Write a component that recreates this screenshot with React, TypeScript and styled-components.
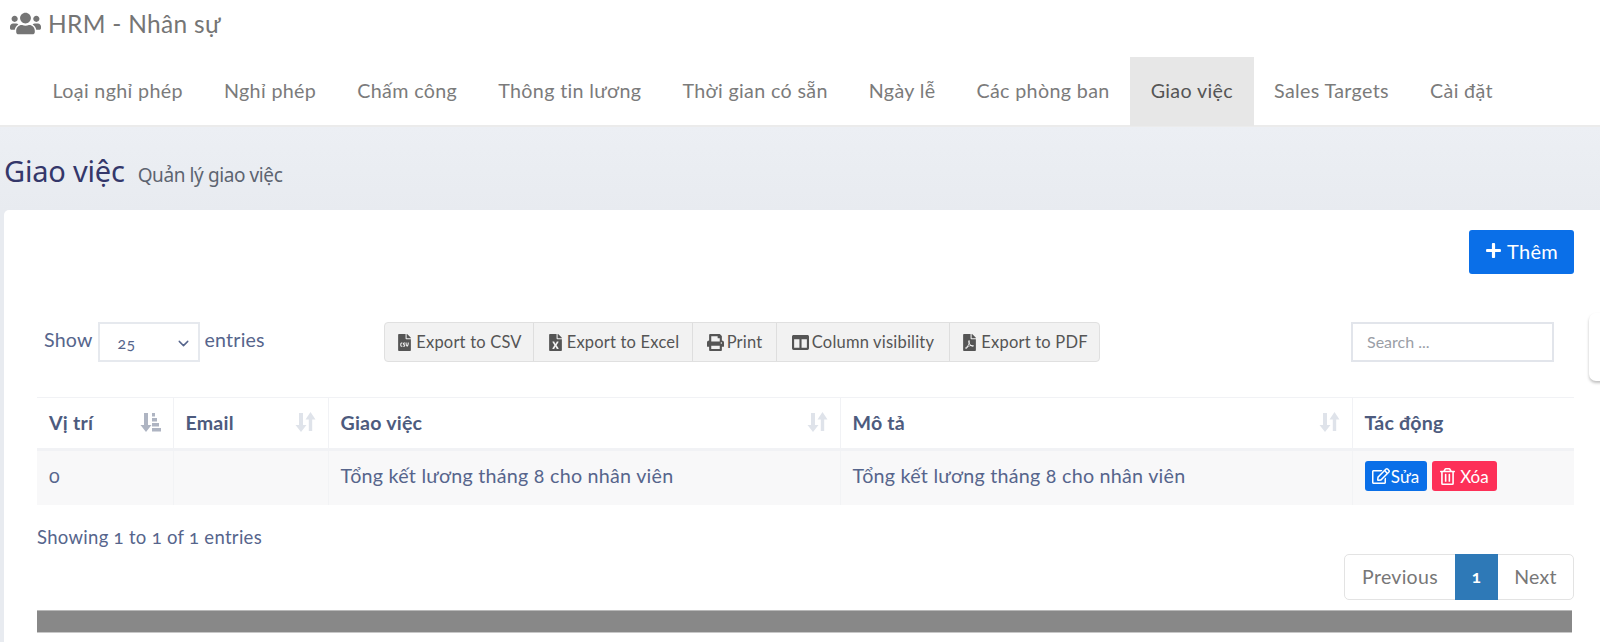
import styled, { createGlobalStyle } from 'styled-components';
import {
    FaUsers,
    FaPlus,
    FaFileCsv,
    FaFileExcel,
    FaPrint,
    FaColumns,
    FaFilePdf,
    FaRegEdit,
    FaRegTrashAlt,
} from 'react-icons/fa';
import { LuChevronDown } from 'react-icons/lu';

const GlobalStyle = createGlobalStyle`
    html, body {
        margin: 0;
        padding: 0;
        background: #ffffff;
        overflow: hidden;
    }
    * {
        box-sizing: border-box;
    }
`;

const Page = styled.div`
    position: relative;
    width: 1600px;
    height: 642px;
    overflow: hidden;
    font-family: 'Lato', 'Liberation Sans', sans-serif;
    font-variant-numeric: oldstyle-nums;
    background: #ffffff;
`;

const Header = styled.header`
    height: 127px;
    background: #ffffff;
    border-bottom: 2px solid #ebebeb;
`;

const BrandRow = styled.div`
    display: flex;
    align-items: center;
    gap: 7px;
    height: 46px;
    margin-bottom: 11px;
    padding-left: 10px;
    font-size: 24.5px;
    letter-spacing: 0.3px;
    color: #757575;
`;

const Nav = styled.nav`
    display: flex;
    height: 69px;
    padding-left: 32px;
`;

const NavItem = styled.a<{ $active?: boolean }>`
    display: flex;
    align-items: center;
    padding: 0 20.5px 3px;
    font-size: 19.7px;
    letter-spacing: 0.35px;
    color: ${(p) => (p.$active ? '#555555' : '#7b7b7b')};
    background: ${(p) => (p.$active ? '#e7e7e7' : 'transparent')};
`;

const Content = styled.main`
    height: 515px;
    padding: 0 0 0 4px;
    background: linear-gradient(#eceff4, #e8ebf0 84px);
`;

const TitleRow = styled.div`
    display: flex;
    align-items: baseline;
    gap: 13px;
    height: 83px;
    padding-top: 24px;
`;

const Title = styled.h1`
    margin: 0;
    font-family: 'Noto Sans', sans-serif;
    font-size: 29px;
    font-weight: 400;
    letter-spacing: -0.2px;
    color: #34376a;
`;

const SubTitle = styled.small`
    font-family: 'Noto Sans', sans-serif;
    font-size: 19px;
    letter-spacing: -0.4px;
    color: #5d6470;
`;

const Card = styled.section`
    height: 432px;
    padding: 20px 26px 0 33px;
    background: #ffffff;
    border-radius: 5px 0 0 0;
`;

const ActionRow = styled.div`
    display: flex;
    justify-content: flex-end;
    height: 92px;
`;

const AddButton = styled.button`
    display: flex;
    align-items: center;
    justify-content: center;
    gap: 5px;
    width: 105px;
    height: 44px;
    padding-bottom: 4px;
    border: 0;
    border-radius: 3px;
    background: #0a6fe8;
    color: #ffffff;
    font-family: inherit;
    font-size: 20px;
    letter-spacing: 0.3px;
`;

const Toolbar = styled.div`
    display: flex;
    align-items: flex-start;
    height: 75px;
`;

const LengthControl = styled.label`
    display: flex;
    align-items: flex-start;
    gap: 5px;
    width: 347px;
    padding-left: 7px;
    font-size: 19.6px;
    line-height: 36px;
    letter-spacing: 0.2px;
    color: #56658c;
`;

const SelectBox = styled.div`
    display: flex;
    align-items: center;
    justify-content: space-between;
    width: 102px;
    height: 40px;
    padding: 2px 6px 0 18px;
    border: 2px solid #e6e9ee;
    font-size: 16px;
    line-height: 1;
    color: #56658c;
`;

const ExportGroup = styled.div`
    display: flex;
    height: 40px;
    border: 1px solid #e0e0e0;
    border-radius: 4px;
    background: #f2f2f2;
`;

const ExportButton = styled.button<{ $width: number }>`
    display: flex;
    align-items: center;
    justify-content: center;
    gap: 3px;
    width: ${(p) => p.$width}px;
    padding: 0;
    border: 0;
    border-right: 1px solid #dedede;
    background: transparent;
    font-family: inherit;
    font-size: 16.5px;
    letter-spacing: 0.2px;
    color: #555555;

    &:last-child {
        border-right: 0;
    }
`;

const SearchInput = styled.input`
    width: 203px;
    height: 40px;
    margin-left: auto;
    margin-right: 20px;
    padding: 0 0 2px 14px;
    border: 2px solid #e2e5eb;
    outline: 0;
    font-family: inherit;
    font-size: 16px;

    &::placeholder {
        color: #9a9ea6;
        opacity: 1;
    }
`;

const Table = styled.table`
    width: 1537px;
    table-layout: fixed;
    border-collapse: collapse;
    color: #56658c;
`;

const HeadCell = styled.th<{ $width?: number }>`
    width: ${(p) => (p.$width ? `${p.$width}px` : 'auto')};
    height: 52px;
    padding: 0 12px 2px;
    text-align: left;
    font-size: 19.6px;
    font-weight: 700;
    letter-spacing: 0.2px;
    color: #4d5b7e;
    border-top: 1px solid #f1f2f5;
    border-left: 1px solid #f1f2f5;
    border-bottom: 3px solid #f1f2f5;

    &:first-child {
        border-left: 0;
    }
`;

const HeadInner = styled.div`
    display: flex;
    align-items: center;
    justify-content: space-between;
`;

const Row = styled.tr`
    background: #f8f8f9;
`;

const BodyCell = styled.td`
    height: 55px;
    padding: 0 12px 5px;
    font-size: 19.7px;
    letter-spacing: 0.25px;
    border-left: 1px solid #f2f3f5;

    &:first-child {
        border-left: 0;
    }
`;

const ActionCell = styled(BodyCell)`
    padding-bottom: 3px;
`;

const RowActions = styled.div`
    display: flex;
    gap: 5px;
`;

const SmallButton = styled.button<{ $danger?: boolean }>`
    display: flex;
    align-items: center;
    justify-content: center;
    gap: ${(p) => (p.$danger ? '4px' : '1px')};
    width: ${(p) => (p.$danger ? '65px' : '62px')};
    height: 30px;
    padding: 0;
    border: 0;
    border-radius: 3px;
    background: ${(p) => (p.$danger ? '#fd3058' : '#0a6fe8')};
    color: #ffffff;
    font-family: inherit;
    font-size: 17px;
`;

const InfoText = styled.div`
    height: 49px;
    padding-top: 21px;
    font-size: 18.5px;
    line-height: 22px;
    letter-spacing: 0.3px;
    color: #56658c;
`;

const PagerRow = styled.div`
    display: flex;
    justify-content: flex-end;
    width: 1537px;
    height: 56px;
`;

const Pager = styled.div`
    display: flex;
    height: 46px;
    border: 1px solid #e3e3e3;
    border-radius: 5px;
    color: #777777;
    font-size: 19.5px;
    letter-spacing: 0.3px;
`;

const PageLink = styled.a<{ $active?: boolean; $width: number }>`
    display: flex;
    align-items: center;
    justify-content: center;
    width: ${(p) => p.$width}px;
    margin: ${(p) => (p.$active ? '-1px 0' : '0')};
    background: ${(p) => (p.$active ? '#2e79b7' : 'transparent')};
    color: ${(p) => (p.$active ? '#ffffff' : '#777777')};
    font-size: ${(p) => (p.$active ? '17px' : 'inherit')};
    font-weight: ${(p) => (p.$active ? 700 : 400)};
`;

const GreyBar = styled.div`
    width: 1535px;
    height: 23px;
    background: #888888;
    border-top: 1px solid #b8b8b8;
    border-bottom: 1px solid #c8c8c8;
`;

const SideTab = styled.div`
    position: absolute;
    top: 313px;
    left: 1589px;
    width: 30px;
    height: 68px;
    background: #ffffff;
    border-radius: 7px;
    box-shadow: 0 2px 3px rgba(0, 0, 0, 0.25);
`;

const SortIcon = () => (
    <svg width="22" height="22" viewBox="0 0 22 22" fill="#dfe3ea">
        <path d="M5 2h4v12h3.500L7 21 1.500 14H5z" />
        <path d="M11.500 8.500 16.500 1l5 7.500h-3.300V20h-3.400V8.500z" />
    </svg>
);

const SortedIcon = () => (
    <svg width="22" height="22" viewBox="0 0 22 22" fill="#aeb4c2">
        <path d="M5 2h4v12h3.500L7 21 1.500 14H5z" />
        <path d="M13 2h3v3.500h-3zM13 7h5v3.500h-5zM13 12h7v3.500h-7zM13 17h9v3.500h-9z" />
    </svg>
);

const NAV_ITEMS = [
    'Loại nghỉ phép',
    'Nghỉ phép',
    'Chấm công',
    'Thông tin lương',
    'Thời gian có sẵn',
    'Ngày lễ',
    'Các phòng ban',
    'Giao việc',
    'Sales Targets',
    'Cài đặt',
];

const App = () => {
    return (
        <Page>
            <GlobalStyle />
            <Header>
                <BrandRow>
                    <FaUsers size={31} />
                    HRM - Nhân sự
                </BrandRow>
                <Nav>
                    {NAV_ITEMS.map((item) => (
                        <NavItem key={item} $active={item === 'Giao việc'}>
                            {item}
                        </NavItem>
                    ))}
                </Nav>
            </Header>

            <Content>
                <TitleRow>
                    <Title>Giao việc</Title>
                    <SubTitle>Quản lý giao việc</SubTitle>
                </TitleRow>

                <Card>
                    <ActionRow>
                        <AddButton>
                            <FaPlus size={17} />
                            Thêm
                        </AddButton>
                    </ActionRow>

                    <Toolbar>
                        <LengthControl>
                            Show
                            <SelectBox>
                                25
                                <LuChevronDown size={17} />
                            </SelectBox>
                            entries
                        </LengthControl>

                        <ExportGroup>
                            <ExportButton $width={149}>
                                <FaFileCsv size={17} />
                                Export to CSV
                            </ExportButton>
                            <ExportButton $width={159}>
                                <FaFileExcel size={17} />
                                Export to Excel
                            </ExportButton>
                            <ExportButton $width={84}>
                                <FaPrint size={17} />
                                Print
                            </ExportButton>
                            <ExportButton $width={173}>
                                <FaColumns size={17} />
                                Column visibility
                            </ExportButton>
                            <ExportButton $width={149}>
                                <FaFilePdf size={17} />
                                Export to PDF
                            </ExportButton>
                        </ExportGroup>

                        <SearchInput placeholder="Search ..." />
                    </Toolbar>

                    <Table>
                        <thead>
                            <tr>
                                <HeadCell $width={136}>
                                    <HeadInner>
                                        Vị trí
                                        <SortedIcon />
                                    </HeadInner>
                                </HeadCell>
                                <HeadCell $width={155}>
                                    <HeadInner>
                                        Email
                                        <SortIcon />
                                    </HeadInner>
                                </HeadCell>
                                <HeadCell $width={512}>
                                    <HeadInner>
                                        Giao việc
                                        <SortIcon />
                                    </HeadInner>
                                </HeadCell>
                                <HeadCell $width={512}>
                                    <HeadInner>
                                        Mô tả
                                        <SortIcon />
                                    </HeadInner>
                                </HeadCell>
                                <HeadCell>Tác động</HeadCell>
                            </tr>
                        </thead>
                        <tbody>
                            <Row>
                                <BodyCell>0</BodyCell>
                                <BodyCell />
                                <BodyCell>Tổng kết lương tháng 8 cho nhân viên</BodyCell>
                                <BodyCell>Tổng kết lương tháng 8 cho nhân viên</BodyCell>
                                <ActionCell>
                                    <RowActions>
                                        <SmallButton>
                                            <FaRegEdit size={18} />
                                            Sửa
                                        </SmallButton>
                                        <SmallButton $danger>
                                            <FaRegTrashAlt size={17} />
                                            Xóa
                                        </SmallButton>
                                    </RowActions>
                                </ActionCell>
                            </Row>
                        </tbody>
                    </Table>

                    <InfoText>Showing 1 to 1 of 1 entries</InfoText>

                    <PagerRow>
                        <Pager>
                            <PageLink $width={110}>Previous</PageLink>
                            <PageLink $width={43} $active>
                                1
                            </PageLink>
                            <PageLink $width={75}>Next</PageLink>
                        </Pager>
                    </PagerRow>

                    <GreyBar />
                </Card>
            </Content>

            <SideTab />
        </Page>
    );
};

export default App;
